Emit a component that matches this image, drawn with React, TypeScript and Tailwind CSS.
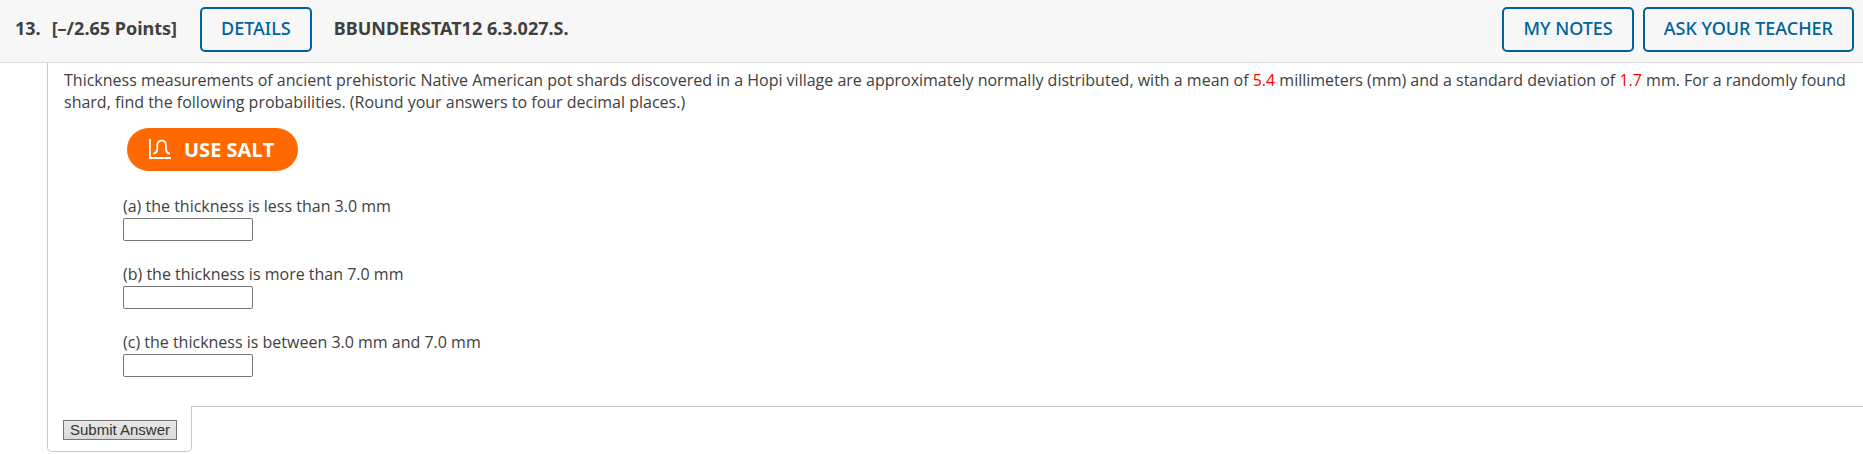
const parts = [
  { id: "a", text: "(a) the thickness is less than 3.0 mm" },
  { id: "b", text: "(b) the thickness is more than 7.0 mm" },
  { id: "c", text: "(c) the thickness is between 3.0 mm and 7.0 mm" },
];

function HeaderButton({ children }: { children: string }) {
  return (
    <button
      type="button"
      className="h-[45px] shrink-0 rounded-[5px] border-2 border-[#00629b] px-[19px] pb-[3px] text-lg font-medium whitespace-nowrap text-[#00629b]"
    >
      {children}
    </button>
  );
}

function CurveIcon() {
  return (
    <svg width="24" height="22" viewBox="0 0 24 22" fill="none" stroke="white" strokeWidth="1.8" aria-hidden="true">
      <path d="M3 0V19H24.500" />
      <path d="M6.300 14.600C9.800 14.600 10.300 12 10.300 8.500V6.200C10.300 3.300 12 1.700 14.600 1.700C17.200 1.700 18.900 3.300 18.900 6.200V8.500C18.900 12 19.400 14.600 22.900 14.600" />
    </svg>
  );
}

export default function App() {
  return (
    <main className="bg-white font-['Open_Sans',sans-serif] text-base leading-[22px] text-[#404040]">
      <header className="flex items-start border-b border-[#dcdcdc] bg-[#f7f7f7] pt-[7px] pr-[9px] pb-[10px] pl-[15px] font-['Noto_Sans',sans-serif]">
        <h1 className="flex h-[43px] items-center pb-[2px] text-lg font-bold whitespace-nowrap">
          <span className="mr-[11px]">13.</span>
          <span>[–/2.65 Points]</span>
        </h1>
        <div className="ml-[23px]">
          <HeaderButton>DETAILS</HeaderButton>
        </div>
        <h2 className="ml-[22px] flex h-[43px] items-center pb-[2px] text-lg font-bold whitespace-nowrap">
          BBUNDERSTAT12 6.3.027.S.
        </h2>
        <div className="ml-auto flex gap-[9px]">
          <HeaderButton>MY NOTES</HeaderButton>
          <HeaderButton>ASK YOUR TEACHER</HeaderButton>
        </div>
      </header>

      <form onSubmit={(e) => e.preventDefault()}>
        <div className="ml-[47px] border-l border-[#c8c8c8] pt-[6px] pr-2 pb-[29px] pl-4">
          <p>
            Thickness measurements of ancient prehistoric Native American pot shards discovered in a Hopi village are
            approximately normally distributed, with a mean of <span className="text-[#ff0000]">5.4</span> millimeters
            (mm) and a standard deviation of <span className="text-[#ff0000]">1.7</span> mm. For a randomly found
            shard, find the following probabilities. (Round your answers to four decimal places.)
          </p>
          <div className="mt-[15px] ml-[59px]">
            <button
              type="button"
              className="ml-1 flex h-[43px] items-center gap-[13px] rounded-full bg-[#ff6900] pr-6 pl-5 text-xl font-bold whitespace-nowrap text-white"
            >
              <CurveIcon />
              USE SALT
            </button>
            <div className="mt-6 flex flex-col gap-[22px]">
              {parts.map((part) => (
                <div key={part.id} className="flex flex-col items-start gap-px">
                  <label htmlFor={part.id}>{part.text}</label>
                  <input
                    id={part.id}
                    type="text"
                    className="h-[23px] w-[130px] rounded-[2px] border border-[#767676] bg-white px-1"
                  />
                </div>
              ))}
            </div>
          </div>
        </div>
        <div className="flex">
          <div className="ml-[47px] w-[145px] shrink-0 rounded-b-[5px] border-r border-b border-l border-[#c8c8c8] pt-[14px] pb-[11px] pl-[15px]">
            <button
              type="submit"
              className="block h-5 border border-[#767676] bg-linear-to-b from-[#e8e8e8] to-[#dadada] px-[6px] font-['Liberation_Sans',sans-serif] text-[15px] leading-[18px] whitespace-nowrap text-[#333333]"
            >
              Submit Answer
            </button>
          </div>
          <div className="grow border-t border-[#c8c8c8]" />
        </div>
      </form>
    </main>
  );
}
